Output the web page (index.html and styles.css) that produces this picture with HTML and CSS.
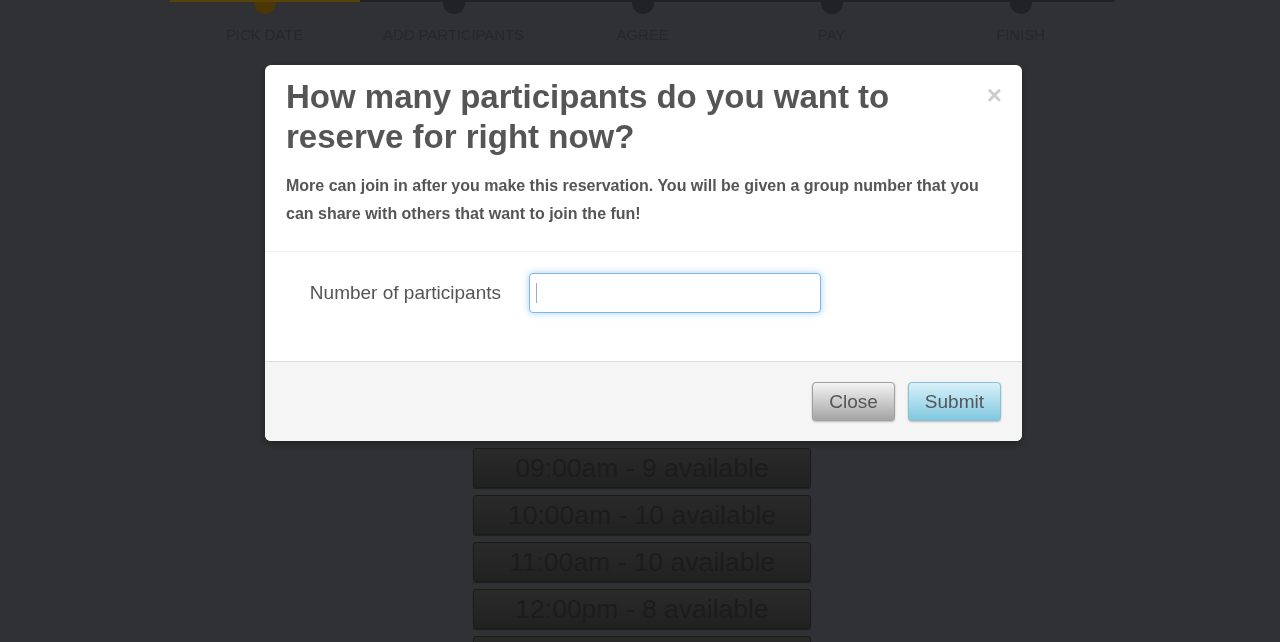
FILE: index.html
```html
<!DOCTYPE html>
<html lang="en">
<head>
    <meta charset="UTF-8">
    <meta name="viewport" content="width=device-width, initial-scale=1.0">
    <title>Reserve</title>
    <link rel="stylesheet" href="styles.css">
</head>
<body>
    <div class="page">
        <div class="steps">
            <div class="step done"><span class="dot"></span><span class="label">PICK DATE</span></div>
            <div class="step"><span class="dot"></span><span class="label">ADD PARTICIPANTS</span></div>
            <div class="step"><span class="dot"></span><span class="label">AGREE</span></div>
            <div class="step"><span class="dot"></span><span class="label">PAY</span></div>
            <div class="step"><span class="dot"></span><span class="label">FINISH</span></div>
        </div>

        <div class="slots">
            <button class="slot">09:00am - 9 available</button>
            <button class="slot">10:00am - 10 available</button>
            <button class="slot">11:00am - 10 available</button>
            <button class="slot">12:00pm - 8 available</button>
            <button class="slot"></button>
        </div>
    </div>

    <div class="backdrop"></div>

    <div class="modal">
        <div class="modal-header">
            <button type="button" class="close">&times;</button>
            <h3>How many participants do you want to reserve for right now?</h3>
            <p>More can join in after you make this reservation. You will be given a group number that you can share with others that want to join the fun!</p>
        </div>
        <div class="modal-body">
            <form class="form-row" onsubmit="return false">
                <label for="count">Number of participants</label>
                <span class="field">
                    <input type="text" id="count" autofocus>
                    <span class="caret"></span>
                </span>
            </form>
        </div>
        <div class="modal-footer">
            <button type="button" class="btn">Close</button>
            <button type="button" class="btn btn-info">Submit</button>
        </div>
    </div>
</body>
</html>
```

FILE: styles.css
```css
html, body {
    margin: 0;
    height: 100%;
    overflow: hidden;
}
body {
    font-family: "Liberation Sans", Arial, sans-serif;
    background: #313236;
    color: #555;
}
.page {
    height: 100%;
    overflow: hidden;
}
.steps {
    width: 945px;
    margin: 0 0 0 170px;
    display: flex;
    border-top: 2px solid #222326;
    position: relative;
}
.steps::before {
    content: "";
    position: absolute;
    left: 0;
    top: -2px;
    width: 190px;
    height: 2px;
    background: #5a4408;
}
.step {
    flex: 1;
    display: flex;
    flex-direction: column;
    align-items: center;
}
.step .dot {
    width: 22px;
    height: 22px;
    margin-top: -10px;
    border-radius: 50%;
    background: #222326;
}
.step.done .dot {
    background: #4d3906;
}
.step .label {
    margin-top: 12px;
    font-size: 15px;
    color: #27282b;
    letter-spacing: -0.1px;
}
.slots {
    width: 338px;
    margin: 405px 0 0 473px;
    display: flex;
    flex-direction: column;
    gap: 7px;
}
.slot {
    height: 40px;
    padding: 0;
    flex: none;
    border: 1px solid #1c1c1d;
    border-radius: 3px;
    background: linear-gradient(#2b2b2c, #222223);
    box-shadow: 0 1px 1px rgba(0, 0, 0, 0.4);
    font-family: "Liberation Sans", Arial, sans-serif;
    font-size: 26.5px;
    line-height: 38px;
    color: #1d1d1e;
}
.backdrop {
    position: fixed;
    inset: 0;
    background: rgba(0, 0, 0, 0.02);
}
.modal {
    position: fixed;
    left: 265px;
    top: 65px;
    width: 757px;
    height: 376px;
    display: flex;
    flex-direction: column;
    background: #fff;
    border-radius: 6px;
    overflow: hidden;
    box-shadow: 0 3px 7px rgba(0, 0, 0, 0.3);
}
.modal-header {
    position: relative;
    padding: 12px 21px 23px;
    border-bottom: 1px solid #eee;
}
.modal-header h3 {
    margin: 0;
    width: 650px;
    font-size: 33px;
    line-height: 40px;
    font-weight: bold;
    color: #555;
}
.modal-header p {
    margin: 15px 0 0;
    font-size: 16px;
    line-height: 28px;
    font-weight: bold;
    color: #555;
}
.close {
    position: absolute;
    top: 16px;
    right: 20px;
    padding: 0;
    border: 0;
    background: none;
    font-family: "Liberation Sans", Arial, sans-serif;
    font-size: 26px;
    font-weight: bold;
    line-height: 28px;
    color: #cdcdcd;
}
.modal-body {
    flex: 1;
    padding: 21px 0 0;
}
.form-row {
    display: flex;
    align-items: center;
    margin: 0;
}
.form-row label {
    width: 236px;
    flex: none;
    text-align: right;
    font-size: 19px;
    color: #555;
    margin-right: 28px;
}
.field {
    position: relative;
    display: block;
}
.field input {
    display: block;
    width: 292px;
    height: 40px;
    box-sizing: border-box;
    border: 1px solid #7fb6e6;
    border-radius: 4px;
    outline: none;
    padding: 4px 6px;
    font-size: 17px;
    box-shadow: 0 0 7px rgba(82, 168, 236, 0.55);
}
.field .caret {
    position: absolute;
    left: 7px;
    top: 10px;
    width: 1px;
    height: 20px;
    background: #aaa;
}
.modal-footer {
    height: 80px;
    box-sizing: border-box;
    background: #f5f5f5;
    border-top: 1px solid #ddd;
    display: flex;
    justify-content: flex-end;
    align-items: center;
    gap: 13px;
    padding: 0 21px 0 0;
}
.btn {
    -webkit-appearance: none;
    appearance: none;
    height: 39px;
    padding: 0 16px;
    border: 1px solid #a0a0a0;
    border-radius: 4px;
    background-color: #ccc;
    background-image: linear-gradient(to bottom, #f4f4f4, #a4a4a4);
    box-shadow: 0 1px 2px rgba(0, 0, 0, 0.25);
    font-family: "Liberation Sans", Arial, sans-serif;
    font-size: 19px;
    color: #555;
}
.btn-info {
    border-color: #88c1d4;
    background-color: #aadcec;
    background-image: linear-gradient(to bottom, #d8f1f9, #80c8e0);
}
```
